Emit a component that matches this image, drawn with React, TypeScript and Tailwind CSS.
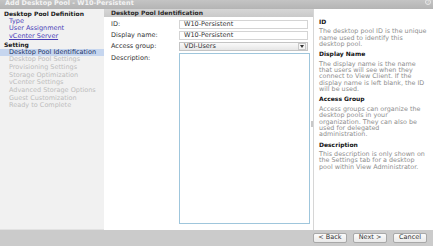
import React from "react";

const disabledItems = [
  "Desktop Pool Settings",
  "Provisioning Settings",
  "Storage Optimization",
  "vCenter Settings",
  "Advanced Storage Options",
  "Guest Customization",
  "Ready to Complete",
];

const helpSections = [
  {
    title: "ID",
    lines: ["The desktop pool ID is the unique", "name used to identify this", "desktop pool."],
  },
  {
    title: "Display Name",
    lines: [
      "The display name is the name",
      "that users will see when they",
      "connect to View Client. If the",
      "display name is left blank, the ID",
      "will be used.",
    ],
  },
  {
    title: "Access Group",
    lines: [
      "Access groups can organize the",
      "desktop pools in your",
      "organization. They can also be",
      "used for delegated",
      "administration.",
    ],
  },
  {
    title: "Description",
    lines: ["This description is only shown on", "the Settings tab for a desktop", "pool within View Administrator."],
  },
];

export default function App() {
  return (
    <div
      className="w-[433px] h-[246px] flex flex-col overflow-hidden bg-[#cccccc] text-[6.5px]"
      style={{ fontFamily: '"DejaVu Sans", Verdana, sans-serif' }}
    >
      {/* Title bar */}
      <div className="h-[9px] flex items-start justify-between bg-gradient-to-b from-[#c4c4c4] to-[#b4b4b4] pl-[5px] pr-[2px]">
        <span className="leading-[6px] -mt-[0.5px] text-[#f4f4f4] font-bold">Add Desktop Pool - W10-Persistent</span>
        <span className="w-[6px] h-[6px] -mt-[1px] rounded-full border border-[#e8e8e8] text-[#e8e8e8] text-[5px] leading-[5px] flex items-center justify-center">
          ?
        </span>
      </div>

      {/* Body */}
      <div className="h-[221px] flex">
        {/* Left nav */}
        <div className="w-[104px] bg-[#f1f1f1] pt-[1px] leading-[7.7px] border-b border-[#e2e2e2]">
          <div className="pl-[4px] font-bold text-[#1a1a1a] text-[6px]">Desktop Pool Definition</div>
          <div className="pl-[9px] text-[#4a3fb8]">Type</div>
          <div className="pl-[9px] text-[#4a3fb8]">User Assignment</div>
          <div className="pl-[9px] text-[#4a3fb8] underline">vCenter Server</div>
          <div className="pl-[4px] font-bold text-[#1a1a1a] text-[6px]">Setting</div>
          <div className="pl-[9px] bg-[#c6d6ef] text-[#1d3568]">Desktop Pool Identification</div>
          {disabledItems.map((t) => (
            <div key={t} className="pl-[9px] text-[#bdbdbd]">
              {t}
            </div>
          ))}
        </div>

        {/* Middle */}
        <div className="w-[209px] flex flex-col bg-white">
          <div className="h-[8px] bg-gradient-to-b from-[#d6d6d6] to-[#c9c9c9] pl-[7px] flex items-center">
            <span className="font-bold text-[6px] leading-[6px] text-[#2a2a2a]">Desktop Pool Identification</span>
          </div>
          <div className="flex-1 flex">
            <div className="flex-1 flex flex-col pt-[3px] pl-[7px] pb-[6px] text-[#333333]">
              <div className="flex items-center h-[9px]">
                <span className="w-[68px]">ID:</span>
                <div className="w-[129px] h-[9px] border border-[#d4d4d4] bg-white flex items-center pl-[4px]">
                  W10-Persistent
                </div>
              </div>
              <div className="flex items-center h-[9px] mt-[2px]">
                <span className="w-[68px]">Display name:</span>
                <div className="w-[129px] h-[9px] border border-[#d4d4d4] bg-white flex items-center pl-[4px]">
                  W10-Persistent
                </div>
              </div>
              <div className="flex items-center h-[9px] mt-[2px]">
                <span className="w-[68px]">Access group:</span>
                <div className="w-[129px] h-[9px] border border-[#c4c4c4] bg-gradient-to-b from-[#fafafa] to-[#e6e6e6] flex items-center pl-[4px] justify-between">
                  <span>VDI-Users</span>
                  <span className="w-[8px] h-[7px] mr-[1px] border border-[#c8c8c8] bg-[#f4f4f4] flex items-center justify-center">
                    <svg width="4" height="3" viewBox="0 0 4 3">
                      <path d="M0 0 L4 0 L2 3 Z" fill="#333" />
                    </svg>
                  </span>
                </div>
              </div>
              <div className="flex flex-1 mt-[2px]">
                <span className="w-[68px] pt-[2px] leading-[6.5px]">Description:</span>
                <div className="w-[131px] border border-[#9fc6dc] bg-white" />
              </div>
            </div>
            <div className="w-[4px] flex items-center justify-center">
              <div className="w-[2px] h-[6px] bg-[#c8c8c8]" />
            </div>
          </div>
        </div>

        {/* Right help panel */}
        <div className="flex-1 bg-white border-l border-[#d6d6d6] pl-[5px] pt-[10px] pr-[2px]">
          {helpSections.map((s, i) => (
            <div key={s.title} className={i > 0 ? "mt-[3.8px]" : ""}>
              <div className="font-bold text-[6px] leading-[6px] text-[#111111]">{s.title}</div>
              <div className="mt-[3.3px] text-[#8e8e8e] text-[6.4px] leading-[6.4px] whitespace-nowrap">
                {s.lines.map((l) => (
                  <div key={l}>{l}</div>
                ))}
              </div>
            </div>
          ))}
        </div>
      </div>

      {/* Footer */}
      <div className="h-[16px] bg-[#cbcbcb] flex items-center justify-end gap-[6px] pr-[6px]">
        {["< Back", "Next >", "Cancel"].map((b) => (
          <div
            key={b}
            className="w-[34px] h-[10px] rounded-[2px] border border-[#a8a8a8] bg-gradient-to-b from-[#fbfbfb] to-[#e9e9e9] flex items-center justify-center text-[#333333]"
          >
            {b}
          </div>
        ))}
      </div>
    </div>
  );
}
